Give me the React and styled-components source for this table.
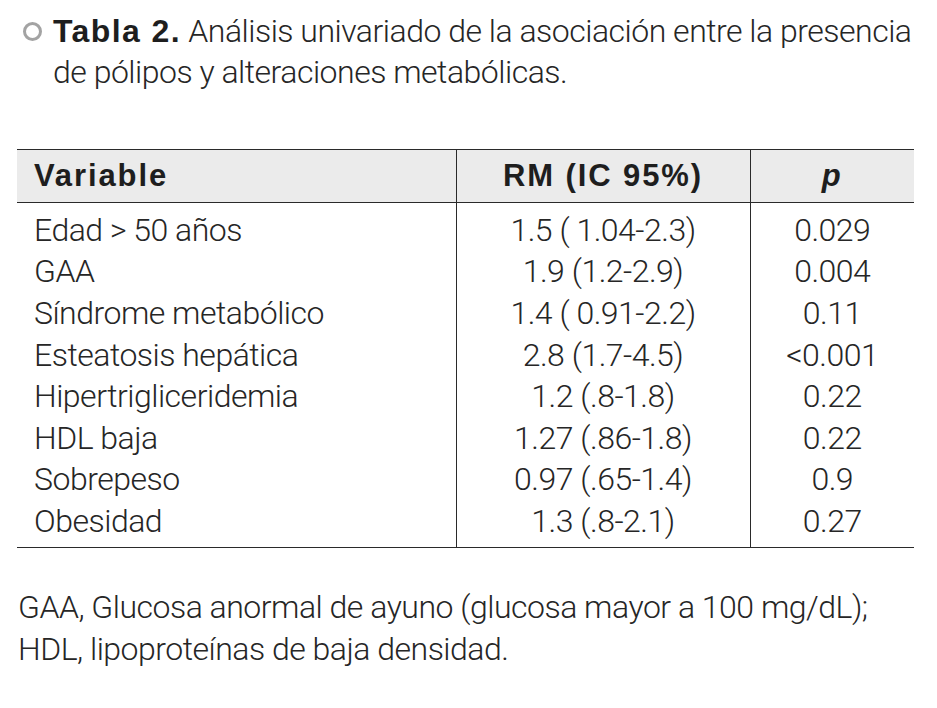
import React from 'react'
import styled, {createGlobalStyle} from 'styled-components'

const GlobalStyle = createGlobalStyle`
  body {
    margin: 0;
    background: #ffffff;
  }
`

const PageStl = styled.div`
  width: 937px;
  height: 708px;
  overflow: hidden;
  color: #262626;
  font-family: Roboto, Inter, "Liberation Sans", sans-serif;
  font-weight: 300;
`

const CaptionStl = styled.div`
  display: flex;
  align-items: flex-start;
  padding: 11px 0 0 23px;
`

const BulletStl = styled.span`
  flex: none;
  width: 19px;
  height: 19px;
  box-sizing: border-box;
  border: 3px solid #a3a3a3;
  border-radius: 50%;
  margin: 11px 11px 0 0;
`

const CaptionTextStl = styled.p`
  margin: 0;
  font-size: 32px;
  line-height: 41px;
  letter-spacing: -0.5px;
  white-space: nowrap;

  & b {
    font-family: "Liberation Sans", Arial, sans-serif;
    font-weight: 700;
    font-size: 32px;
    letter-spacing: 1.4px;
    color: #1e1e1e;
  }
`

const TableStl = styled.table`
  width: 897px;
  margin: 56px 0 0 17px;
  border-collapse: collapse;
  border-top: 1.5px solid #2a2a2a;
  border-bottom: 1.5px solid #2a2a2a;
`

const HeadCellStl = styled.th`
  height: 52px;
  padding: 0 0 0 ${p => p.$left ? '17px' : '0'};
  background: #ebebeb;
  border-bottom: 1.5px solid #2a2a2a;
  border-left: ${p => p.$first ? 'none' : '1px solid #2a2a2a'};
  text-align: ${p => p.$left ? 'left' : 'center'};
  font-family: "Liberation Sans", Arial, sans-serif;
  font-weight: 700;
  font-size: 31px;
  letter-spacing: 1.9px;
  font-style: ${p => p.$italic ? 'italic' : 'normal'};
  color: #1e1e1e;
`

const CellStl = styled.td`
  height: 41.6px;
  padding: 0 0 0 ${p => p.$left ? '17px' : '0'};
  border-left: ${p => p.$first ? 'none' : '1px solid #2a2a2a'};
  text-align: ${p => p.$left ? 'left' : 'center'};
  font-size: 32px;
  letter-spacing: -0.5px;
  white-space: nowrap;

  tr:first-child > & {
    padding-top: 6px;
  }

  tr:last-child > & {
    padding-bottom: 5px;
  }
`

const NoteStl = styled.p`
  margin: 38px 0 0 18px;
  font-size: 32px;
  line-height: 42px;
  letter-spacing: -0.5px;
  white-space: nowrap;
`

const rows = [
  ['Edad > 50 años', '1.5 ( 1.04-2.3)', '0.029'],
  ['GAA', '1.9 (1.2-2.9)', '0.004'],
  ['Síndrome metabólico', '1.4 ( 0.91-2.2)', '0.11'],
  ['Esteatosis hepática', '2.8 (1.7-4.5)', '<0.001'],
  ['Hipertrigliceridemia', '1.2 (.8-1.8)', '0.22'],
  ['HDL baja', '1.27 (.86-1.8)', '0.22'],
  ['Sobrepeso', '0.97 (.65-1.4)', '0.9'],
  ['Obesidad', '1.3 (.8-2.1)', '0.27'],
]

export default function App() {
  return (
    <PageStl>
      <GlobalStyle />
      <CaptionStl>
        <BulletStl />
        <CaptionTextStl>
          <b>Tabla 2.</b> Análisis univariado de la asociación entre la presencia
          <br />
          de pólipos y alteraciones metabólicas.
        </CaptionTextStl>
      </CaptionStl>

      <TableStl>
        <colgroup>
          <col style={{width: '439px'}} />
          <col style={{width: '294px'}} />
          <col style={{width: '164px'}} />
        </colgroup>
        <thead>
          <tr>
            <HeadCellStl $first $left>Variable</HeadCellStl>
            <HeadCellStl>RM (IC 95%)</HeadCellStl>
            <HeadCellStl $italic>p</HeadCellStl>
          </tr>
        </thead>
        <tbody>
          {rows.map(r => (
            <tr key={r[0]}>
              <CellStl $first $left>{r[0]}</CellStl>
              <CellStl>{r[1]}</CellStl>
              <CellStl>{r[2]}</CellStl>
            </tr>
          ))}
        </tbody>
      </TableStl>

      <NoteStl>
        GAA, Glucosa anormal de ayuno (glucosa mayor a 100 mg/dL);
        <br />
        HDL, lipoproteínas de baja densidad.
      </NoteStl>
    </PageStl>
  )
}
